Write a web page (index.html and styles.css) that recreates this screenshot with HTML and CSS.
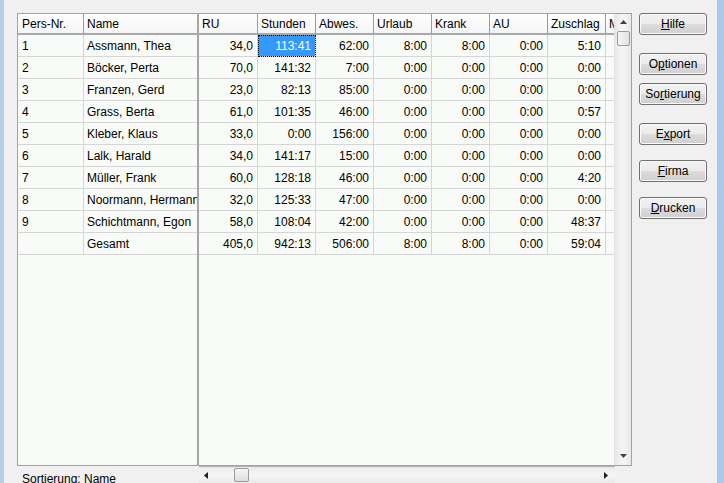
FILE: index.html
```html
<!DOCTYPE html>
<html lang="de">

<head>
    <meta charset="UTF-8">
    <title>Stundenübersicht</title>
    <link rel="stylesheet" href="styles.css">
</head>

<body>
    <div class="window">
        <div class="main">
            <div class="grid-area">
                <div class="grid">
                    <div class="pane fixed">
                        <table>
                            <thead>
                                <tr>
                                    <th class="c-nr">Pers-Nr.</th>
                                    <th class="c-name">Name</th>
                                </tr>
                            </thead>
                            <tbody>
                                <tr><td>1</td><td class="name">Assmann, Thea</td></tr>
                                <tr><td>2</td><td class="name">Böcker, Perta</td></tr>
                                <tr><td>3</td><td class="name">Franzen, Gerd</td></tr>
                                <tr><td>4</td><td class="name">Grass, Berta</td></tr>
                                <tr><td>5</td><td class="name">Kleber, Klaus</td></tr>
                                <tr><td>6</td><td class="name">Lalk, Harald</td></tr>
                                <tr><td>7</td><td class="name">Müller, Frank</td></tr>
                                <tr><td>8</td><td class="name">Noormann, Hermann</td></tr>
                                <tr><td>9</td><td class="name">Schichtmann, Egon</td></tr>
                                <tr><td></td><td class="name">Gesamt</td></tr>
                            </tbody>
                        </table>
                    </div>

                    <div class="pane data">
                        <table>
                            <thead>
                                <tr>
                                    <th class="c-first">RU</th>
                                    <th>Stunden</th>
                                    <th>Abwes.</th>
                                    <th>Urlaub</th>
                                    <th>Krank</th>
                                    <th>AU</th>
                                    <th>Zuschlag</th>
                                    <th>Mehrarb.</th>
                                </tr>
                            </thead>
                            <tbody>
                                <tr><td>34,0</td><td class="sel">113:41</td><td>62:00</td><td>8:00</td><td>8:00</td><td>0:00</td><td>5:10</td><td>0:00</td></tr>
                                <tr><td>70,0</td><td>141:32</td><td>7:00</td><td>0:00</td><td>0:00</td><td>0:00</td><td>0:00</td><td>0:00</td></tr>
                                <tr><td>23,0</td><td>82:13</td><td>85:00</td><td>0:00</td><td>0:00</td><td>0:00</td><td>0:00</td><td>0:00</td></tr>
                                <tr><td>61,0</td><td>101:35</td><td>46:00</td><td>0:00</td><td>0:00</td><td>0:00</td><td>0:57</td><td>0:00</td></tr>
                                <tr><td>33,0</td><td>0:00</td><td>156:00</td><td>0:00</td><td>0:00</td><td>0:00</td><td>0:00</td><td>0:00</td></tr>
                                <tr><td>34,0</td><td>141:17</td><td>15:00</td><td>0:00</td><td>0:00</td><td>0:00</td><td>0:00</td><td>0:00</td></tr>
                                <tr><td>60,0</td><td>128:18</td><td>46:00</td><td>0:00</td><td>0:00</td><td>0:00</td><td>4:20</td><td>0:00</td></tr>
                                <tr><td>32,0</td><td>125:33</td><td>47:00</td><td>0:00</td><td>0:00</td><td>0:00</td><td>0:00</td><td>0:00</td></tr>
                                <tr><td>58,0</td><td>108:04</td><td>42:00</td><td>0:00</td><td>0:00</td><td>0:00</td><td>48:37</td><td>0:00</td></tr>
                                <tr><td>405,0</td><td>942:13</td><td>506:00</td><td>8:00</td><td>8:00</td><td>0:00</td><td>59:04</td><td>0:00</td></tr>
                            </tbody>
                        </table>
                    </div>

                    <div class="vscroll">
                        <svg class="arrow-up" width="7" height="4" viewBox="0 0 7 4"><path d="M0 4 L3.5 0 L7 4 Z" fill="#404040"/></svg>
                        <div class="vthumb"></div>
                        <div class="spacer"></div>
                        <svg class="arrow-down" width="7" height="4" viewBox="0 0 7 4"><path d="M0 0 L7 0 L3.5 4 Z" fill="#404040"/></svg>
                    </div>
                </div>

                <div class="footer">
                    <div class="status">Sortierung: Name</div>
                    <div class="hscroll">
                        <svg class="arrow-left" width="4" height="7" viewBox="0 0 4 7"><path d="M4 0 L0 3.5 L4 7 Z" fill="#202020"/></svg>
                        <div class="hthumb"></div>
                        <div class="spacer"></div>
                        <svg class="arrow-right" width="4" height="7" viewBox="0 0 4 7"><path d="M0 0 L4 3.5 L0 7 Z" fill="#202020"/></svg>
                    </div>
                </div>
            </div>

            <div class="buttons">
                <button type="button" class="btn"><u>H</u>ilfe</button>
                <button type="button" class="btn gap-lg">O<u>p</u>tionen</button>
                <button type="button" class="btn gap-sm">So<u>r</u>tierung</button>
                <button type="button" class="btn gap-lg">E<u>x</u>port</button>
                <button type="button" class="btn gap-md"><u>F</u>irma</button>
                <button type="button" class="btn gap-md"><u>D</u>rucken</button>
            </div>
        </div>
    </div>
</body>

</html>
```

FILE: styles.css
```css
body {
    margin: 0;
    font-family: "Liberation Sans", Arial, sans-serif;
    font-size: 12px;
    color: #000;
}

.window {
    width: 724px;
    height: 483px;
    box-sizing: border-box;
    overflow: hidden;
    background-color: #f0f0f0;
    border-left: 4px solid #b4cde8;
    border-right: 7px solid #abc8e8;
}

.main {
    display: flex;
    gap: 7px;
    padding: 13px 0 0 13px;
}

.grid-area {
    width: 615px;
}

.grid {
    display: flex;
    height: 453px;
    box-sizing: border-box;
    border: 1px solid #a3a3a3;
    background-color: #f8fbf8;
}

.pane {
    overflow: hidden;
}

.fixed {
    width: 181px;
    flex: none;
    box-sizing: border-box;
    border-right: 2px solid #a6a6a6;
}

.data {
    width: 415px;
    flex: none;
}

table {
    border-collapse: separate;
    border-spacing: 0;
    table-layout: fixed;
}

.fixed table {
    width: 179px;
}

.data table {
    width: 465px;
}

th,
td {
    box-sizing: border-box;
    white-space: nowrap;
    overflow: hidden;
    font-weight: normal;
}

th {
    width: 58px;
    height: 21px;
    padding: 0 3px;
    text-align: left;
    background: linear-gradient(#ffffff, #f4f5f7);
    border-right: 1px solid #9c9c9c;
    border-bottom: 2px solid #a9a9a9;
}

th.c-nr {
    width: 66px;
    padding-left: 4px;
}

th.c-name {
    width: 113px;
    border-right: none;
}

th.c-first {
    width: 59px;
}

td {
    height: 22px;
    padding: 0 4px 0 3px;
    text-align: right;
    border-right: 1px solid #d6d6d6;
    border-bottom: 1px solid #d6d6d6;
}

.fixed td {
    text-align: left;
    padding-left: 4px;
}

.fixed td.name {
    padding-left: 3px;
    border-right: none;
}

td.sel {
    background-color: #3399ff;
    color: #fff;
    outline: 1px dotted #000;
    outline-offset: -1px;
}

.vscroll {
    width: 17px;
    flex: none;
    display: flex;
    flex-direction: column;
    align-items: center;
    box-sizing: border-box;
    height: 451px;
    background: linear-gradient(90deg, #e8e8e8, #f4f4f4 40%, #f4f4f4 60%, #e8e8e8);
    border-left: 1px solid #e2e2e2;
}

.arrow-up {
    margin-top: 6px;
}

.arrow-down {
    margin-bottom: 7px;
}

.spacer {
    flex: 1;
}

.vthumb {
    width: 13px;
    height: 15px;
    margin-top: 7px;
    box-sizing: border-box;
    border: 1px solid #9b9b9b;
    border-radius: 2px;
    background: linear-gradient(90deg, #f6f6f6, #e2e2e2);
}

.footer {
    display: flex;
}

.status {
    width: 182px;
    flex: none;
    padding: 6px 0 0 5px;
    box-sizing: border-box;
}

.hscroll {
    width: 416px;
    height: 17px;
    flex: none;
    display: flex;
    align-items: center;
    box-sizing: border-box;
    border-top: 1px solid #b0b0b0;
    background: linear-gradient(#e9e9e9, #f4f4f4 40%, #f4f4f4 60%, #e9e9e9);
}

.arrow-left {
    margin-left: 5px;
}

.hthumb {
    width: 15px;
    height: 14px;
    margin-left: 26px;
    box-sizing: border-box;
    border: 1px solid #9b9b9b;
    border-radius: 2px;
    background: linear-gradient(#f6f6f6, #dedede);
}

.arrow-right {
    margin-right: 7px;
}

.buttons {
    display: flex;
    flex-direction: column;
    width: 68px;
}

.btn {
    width: 68px;
    height: 22px;
    padding: 0;
    font-family: "Liberation Sans", Arial, sans-serif;
    font-size: 12px;
    color: #000;
    border: 1px solid #707070;
    border-radius: 3px;
    background: linear-gradient(#f2f2f2, #ebebeb 50%, #dddddd 50%, #cfcfcf);
    box-shadow: inset 0 0 0 1px #fbfbfb;
}

.gap-lg {
    margin-top: 18px;
}

.gap-md {
    margin-top: 15px;
}

.gap-sm {
    margin-top: 8px;
}
```
